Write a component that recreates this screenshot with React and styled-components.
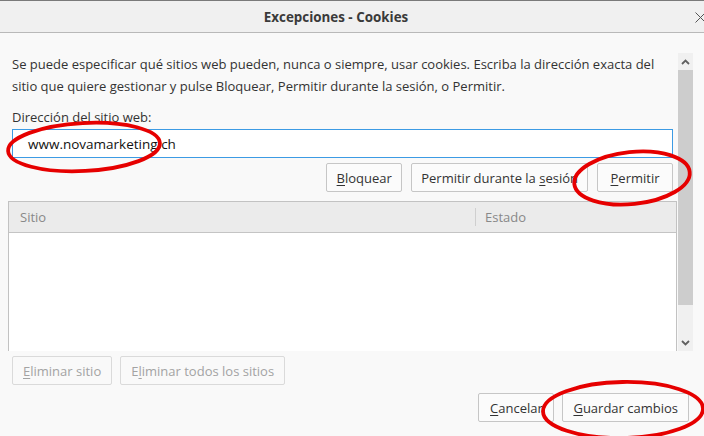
import React from "react";
import styled, { createGlobalStyle } from "styled-components";

const Global = createGlobalStyle`
  html, body { margin: 0; padding: 0; }
  body {
    font-family: "Open Sans", "Noto Sans", "DejaVu Sans", sans-serif;
    background: #f9f9f9;
  }
`;

const Window = styled.div`
  position: relative;
  width: 704px;
  height: 436px;
  overflow: hidden;
  box-sizing: border-box;
  background: #f9f9f9;
  border-top: 1px solid #7a7a7a;
  display: flex;
  flex-direction: column;
  & > * { flex-shrink: 0; }
`;

const TitleBar = styled.div`
  height: 31px;
  background: #f0f0f0;
  border-bottom: 1px solid #b9b9b9;
  display: flex;
  align-items: center;
`;

const Title = styled.div`
  flex: 1;
  text-align: center;
  font-size: 13.4px;
  font-weight: 700;
  color: #3a3a3a;
`;

const Close = styled.div`
  flex: none;
  width: 9px;
  height: 11px;
  margin-left: 23px;
  margin-top: 2px;
  display: flex;
  align-items: center;
`;

const Upper = styled.div`
  height: 318px;
  display: flex;
  overflow: hidden;
`;

const Content = styled.div`
  flex: none;
  width: 678px;
  padding-top: 20px;
  box-sizing: border-box;
  display: flex;
  flex-direction: column;
  & > * { flex-shrink: 0; }
`;

const Text = styled.p`
  margin: 0 0 0 12px;
  font-size: 13px;
  line-height: 22px;
  color: #333;
  white-space: nowrap;
`;

const Label = styled(Text)`
  margin-top: 9px;
`;

const Field = styled.div`
  margin: 1px 0 0 12px;
  width: 661px;
  height: 29px;
  box-sizing: border-box;
  border: 1px solid #3c9be4;
  background: #fff;
  display: flex;
  align-items: center;
  padding-left: 15px;
  font-size: 13.5px;
  color: #111;
`;

const Row = styled.div`
  display: flex;
  gap: ${(p) => p.$gap || 9}px;
  justify-content: ${(p) => (p.$end ? "flex-end" : "flex-start")};
  margin-top: ${(p) => p.$mt || 0}px;
  padding-left: ${(p) => p.$pl || 0}px;
  padding-right: ${(p) => p.$pr || 0}px;
`;

const Button = styled.div`
  height: 29px;
  min-width: 76px;
  box-sizing: border-box;
  padding: 0 ${(p) => p.$px || 9}px;
  border: 1px solid ${(p) => (p.$disabled ? "#dadada" : "#c6c6c6")};
  border-radius: 2px;
  background: ${(p) => (p.$disabled ? "#f9f9f9" : "#fbfbfb")};
  color: ${(p) => (p.$disabled ? "#a3a3a3" : "#333")};
  font-size: 13px;
  display: flex;
  align-items: center;
  justify-content: center;
  white-space: nowrap;
`;

const Key = styled.span`
  text-decoration: underline;
  text-underline-offset: 2px;
`;

const Table = styled.div`
  margin: 9px 0 0 8px;
  width: 669px;
  height: 200px;
  box-sizing: border-box;
  border: 1px solid #c2c2c2;
  background: #fff;
`;

const Header = styled.div`
  height: 31px;
  box-sizing: border-box;
  background: #ebebeb;
  border-bottom: 1px solid #c4c4c4;
  display: grid;
  grid-template-columns: 466px 1fr;
  align-items: center;
  font-size: 13px;
  color: #888;
`;

const HeadCell = styled.div`
  height: 18px;
  display: flex;
  align-items: center;
  padding-left: ${(p) => p.$pl}px;
  border-left: ${(p) => (p.$divider ? "1px solid #cfcfcf" : "none")};
`;

const ScrollBar = styled.div`
  flex: none;
  width: 15px;
  margin-top: 20px;
  height: 298px;
  background: #f0f0f0;
  display: flex;
  flex-direction: column;
`;

const ScrollBtn = styled.div`
  height: 17px;
  display: flex;
  align-items: center;
  justify-content: center;
`;

const Thumb = styled.div`
  height: 235px;
  background: #cdcdcd;
`;

const Track = styled.div`
  flex: 1;
`;

const Overlay = styled.svg`
  position: absolute;
  left: 0;
  top: 0;
  pointer-events: none;
`;

const Chevron = ({ up }) => (
  <svg width="9" height="6" viewBox="0 0 9 6">
    <path
      d={up ? "M1 5 L4.5 1.5 L8 5" : "M1 1 L4.5 4.5 L8 1"}
      fill="none"
      stroke="#606060"
      strokeWidth="1.8"
    />
  </svg>
);

export default function App() {
  return (
    <>
      <Global />
      <Window>
        <TitleBar>
          <Title>Excepciones - Cookies</Title>
          <Close>
            <svg width="11" height="11" viewBox="0 0 11 11" style={{ overflow: "visible" }}>
              <path d="M0.5 0.5 L10.5 10.5 M10.5 0.5 L0.5 10.5" stroke="#555" strokeWidth="1" />
            </svg>
          </Close>
        </TitleBar>
        <Upper>
          <Content>
            <Text>
              Se puede especificar qué sitios web pueden, nunca o siempre, usar cookies. Escriba la dirección exacta del
              <br />
              sitio que quiere gestionar y pulse Bloquear, Permitir durante la sesión, o Permitir.
            </Text>
            <Label>Dirección del sitio web:</Label>
            <Field>www.novamarketing.ch</Field>
            <Row $end $mt={5} $pr={5}>
              <Button>
                <Key>B</Key>loquear
              </Button>
              <Button>
                Permitir durante la&nbsp;<Key>s</Key>esión
              </Button>
              <Button>
                <Key>P</Key>ermitir
              </Button>
            </Row>
            <Table>
              <Header>
                <HeadCell $pl={11}>Sitio</HeadCell>
                <HeadCell $pl={9} $divider>
                  Estado
                </HeadCell>
              </Header>
            </Table>
          </Content>
          <ScrollBar>
            <ScrollBtn>
              <Chevron up />
            </ScrollBtn>
            <Thumb />
            <Track />
            <ScrollBtn>
              <Chevron />
            </ScrollBtn>
          </ScrollBar>
        </Upper>
        <Row $mt={5} $pl={12} $gap={8}>
          <Button $disabled $px={10}>
            <Key>E</Key>liminar sitio
          </Button>
          <Button $disabled $px={10}>
            E<Key>l</Key>iminar todos los sitios
          </Button>
        </Row>
        <Row $end $mt={8} $pr={15} $gap={8}>
          <Button>
            <Key>C</Key>ancelar
          </Button>
          <Button $px={10}>
            <Key>G</Key>uardar cambios
          </Button>
        </Row>
        <Overlay width="704" height="436" viewBox="0 0 704 436">
          <g fill="none" stroke="#e60000" strokeWidth="3.8">
            <ellipse cx="84" cy="146" rx="76" ry="24" transform="rotate(-3 84 146)" />
            <ellipse cx="632" cy="177" rx="58" ry="26" transform="rotate(-6 632 177)" />
            <ellipse cx="623" cy="409" rx="80" ry="28" transform="rotate(-1 623 409)" />
          </g>
        </Overlay>
      </Window>
    </>
  );
}
